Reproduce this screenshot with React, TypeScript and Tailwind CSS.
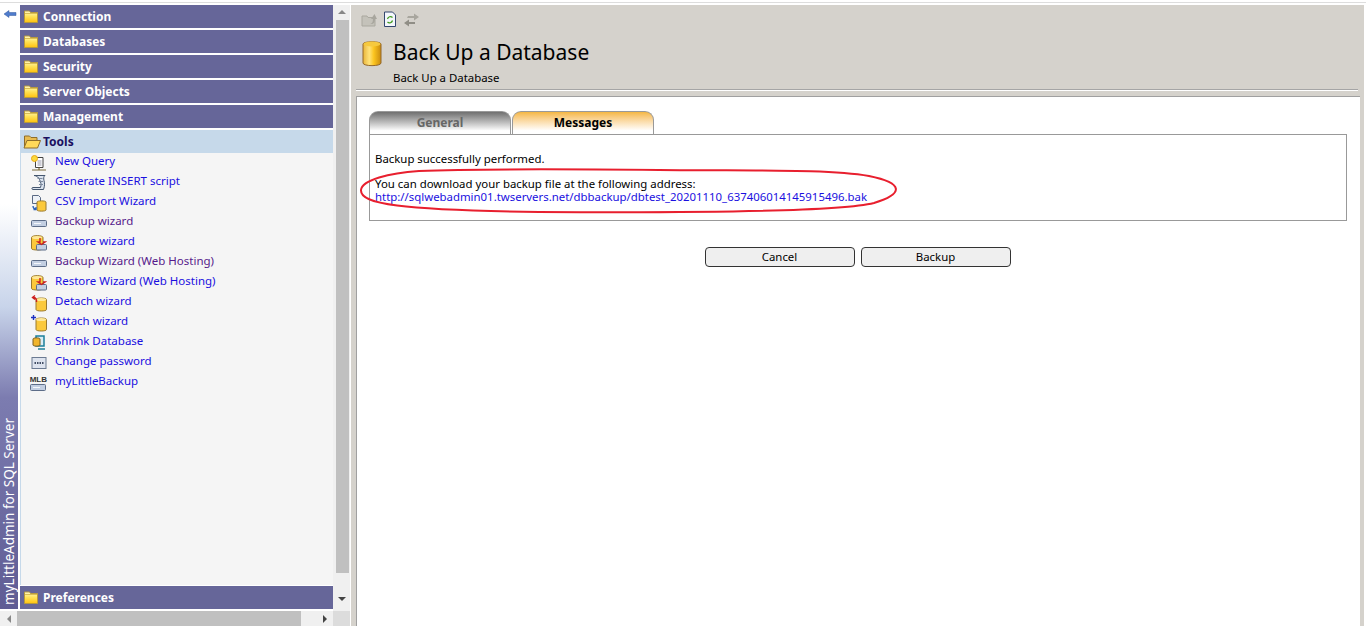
const font = "[font-family:'Noto_Sans',sans-serif]";

function Cylinder({ size = 12 }: { size?: number }) {
  return (
    <svg width={size} height={size * 1.35} viewBox="0 0 20 27">
      <defs>
        <linearGradient id="cyl" x1="0" x2="1" y1="0" y2="0">
          <stop offset="0" stopColor="#e9b53a" />
          <stop offset="0.35" stopColor="#ffe27a" />
          <stop offset="0.6" stopColor="#fcc51f" />
          <stop offset="1" stopColor="#c98a0e" />
        </linearGradient>
      </defs>
      <path d="M1 4C1 1 19 1 19 4V23C19 26.500 1 26.500 1 23Z" fill="url(#cyl)" stroke="#94682a" strokeWidth="1" />
      <ellipse cx="10" cy="4" rx="8.500" ry="2.400" fill="#f6c93e" />
    </svg>
  );
}

function Folder({ open = false }: { open?: boolean }) {
  if (open)
    return (
      <svg width="18" height="15" viewBox="0 0 18 15" className="shrink-0">
        <path d="M1.500 13.500V2h5l1.500 1.500h6v3" fill="#e7bb50" stroke="#8e6d2a" />
        <path d="M1 14 4 6.500h13.500L14.500 14Z" fill="#ffd95a" stroke="#8e6d2a" />
      </svg>
    );
  return (
    <svg width="14" height="13" viewBox="0 0 14 13" className="shrink-0">
      <defs>
        <linearGradient id="fold" x1="0" x2="0" y1="0" y2="1">
          <stop offset="0" stopColor="#fff9c8" />
          <stop offset="0.45" stopColor="#ffe45c" />
          <stop offset="1" stopColor="#ffc20e" />
        </linearGradient>
      </defs>
      <path d="M.5 12.500V1h5l1 1.500h7v10Z" fill="url(#fold)" stroke="#b89a3c" />
      <path d="M1 3.500h12" stroke="#d9bd55" />
    </svg>
  );
}

function Drive() {
  return (
    <svg width="16" height="16" viewBox="0 0 16 16">
      <rect x="0.500" y="5.500" width="15" height="6" rx="1" fill="#c3cfe2" stroke="#5d6d88" />
      <path d="M3 8.500h7" stroke="#f4f7fb" />
    </svg>
  );
}

function Restore() {
  return (
    <svg width="16" height="16" viewBox="0 0 16 16">
      <path d="M.5 2.500C.5 0 12 0 12 2.500V13.500C12 15.500 .5 15.500 .5 13.500Z" fill="#fbc93c" stroke="#9a7a30" />
      <ellipse cx="6" cy="2.500" rx="5" ry="1.500" fill="#fde89a" />
      <rect x="5.500" y="9.500" width="10" height="5.500" rx="1" fill="#c3cfe2" stroke="#5d6d88" />
      <path d="M9 3v4H7l3.500 2.500L14 7h-2" fill="none" stroke="#cc1f1f" strokeWidth="1.400" />
    </svg>
  );
}

function ToolIcon({ name }: { name: string }) {
  if (name === "query")
    return (
      <svg width="16" height="17" viewBox="0 0 16 17">
        <path d="M4.500 2.500h7.500v10H4.500Z" fill="#fff" stroke="#444" />
        <path d="M6.500 6h4M6.500 8h4M6.500 10h4" stroke="#99a" />
        <circle cx="3.500" cy="3.500" r="3" fill="#fbd93c" stroke="#e8a818" />
        <path d="M1 15h14M8 12.500V15" stroke="#7a6a3a" strokeWidth="1.200" />
      </svg>
    );
  if (name === "script")
    return (
      <svg width="16" height="18" viewBox="0 0 16 18">
        <path d="M3 1.500h11c-1.500 1-1.500 3-1 5s1 5-.5 9H2c-1.500 0-1.500-2 0-2h7.500c1-3 .5-5-1-8C7.800 4 6 1.500 3 1.500Z" fill="#dbe3ee" stroke="#44566e" />
        <path d="M6.500 4.500h5M7.500 7.500h4.500M8 10.500h4" stroke="#7d8ba0" />
      </svg>
    );
  if (name === "csv")
    return (
      <svg width="16" height="18" viewBox="0 0 16 18">
        <path d="M1.500 1.500h6l2 2v6h-8Z" fill="#eef2f8" stroke="#5a6a85" />
        <path d="M6 8C6 6.500 15 6.500 15 8v8c0 1.500-9 1.500-9 0Z" fill="#fbc93c" stroke="#9a7a30" />
        <path d="M2 12c0 2 1 3 3 3M5 13v2.500H2.500" fill="none" stroke="#2d62b8" strokeWidth="1.300" />
      </svg>
    );
  if (name === "backup") return <Drive />;
  if (name === "restore") return <Restore />;
  if (name === "detach" || name === "attach")
    return (
      <svg width="16" height="18" viewBox="0 0 16 18">
        <path d="M5 5.500C5 3.500 15.500 3.500 15.500 5.500V15.500C15.500 17.500 5 17.500 5 15.500Z" fill="#fbc93c" stroke="#9a7a30" />
        <ellipse cx="10.200" cy="5.500" rx="5" ry="1.600" fill="#fde89a" />
        {name === "attach" ? (
          <path d="M0 3.500h5M2.500 1v5" stroke="#1d2fc0" strokeWidth="1.400" />
        ) : (
          <path d="M5.500 8c.5-3-1-4.500-3-4.500M4 1.500 1.500 3.500 4 5.500" fill="none" stroke="#cc1f1f" strokeWidth="1.400" />
        )}
      </svg>
    );
  if (name === "shrink")
    return (
      <svg width="16" height="16" viewBox="0 0 16 16">
        <path d="M5 1h8v10H5Z" fill="#d8ecf5" stroke="#1b7f9a" strokeWidth="1.500" />
        <path d="M2 4C2 2.500 9 2.500 9 4v6c0 1.500-7 1.500-7 0Z" fill="#f0b52c" stroke="#7b5f20" />
        <path d="M7 14h7" stroke="#1b7f9a" strokeWidth="1.500" />
      </svg>
    );
  if (name === "password")
    return (
      <svg width="16" height="14" viewBox="0 0 16 14">
        <rect x="1" y="1.500" width="14" height="11" fill="#dde3ee" stroke="#6b7a92" />
        <path d="M3.500 7h9" stroke="#434f66" strokeWidth="2" strokeDasharray="1.500 1" />
      </svg>
    );
  return (
    <div className="flex flex-col items-center">
      <span className="font-['Liberation_Sans',sans-serif] text-[8px] font-bold leading-[8px] text-[#333]">MLB</span>
      <svg width="16" height="7" viewBox="0 0 16 7">
        <rect x="0.500" y="0.500" width="15" height="6" rx="1" fill="#c3cfe2" stroke="#5d6d88" />
        <path d="M3 3.500h7" stroke="#f4f7fb" />
      </svg>
    </div>
  );
}

const sections = ["Connection", "Databases", "Security", "Server Objects", "Management"];

const tools = [
  { label: "New Query", icon: "query" },
  { label: "Generate INSERT script", icon: "script" },
  { label: "CSV Import Wizard", icon: "csv" },
  { label: "Backup wizard", icon: "backup", visited: true },
  { label: "Restore wizard", icon: "restore" },
  { label: "Backup Wizard (Web Hosting)", icon: "backup", visited: true },
  { label: "Restore Wizard (Web Hosting)", icon: "restore" },
  { label: "Detach wizard", icon: "detach" },
  { label: "Attach wizard", icon: "attach" },
  { label: "Shrink Database", icon: "shrink" },
  { label: "Change password", icon: "password" },
  { label: "myLittleBackup", icon: "mlb" },
];

function SectionBar({ title }: { title: string }) {
  return (
    <div className="mb-[2px] flex h-[23px] items-center gap-[5px] bg-[#666699] pl-[4px] text-[12px] font-bold text-white">
      <Folder />
      <span>{title}</span>
    </div>
  );
}

function Sidebar() {
  return (
    <div className="flex w-[350px] flex-col">
      <div className="flex h-[606px]">
        <div className="mb-[2px] flex w-[18px] flex-col bg-[linear-gradient(to_bottom,#ffffff_33%,#c8d4ea_50%,#7c7cb0_65%,#5f5c94_100%)]">
          <svg width="14" height="8" viewBox="0 0 14 8" className="ml-[3px] mt-[5px]">
            <path d="M1 4 6 .5V2.500h7v3H6v2Z" fill="#4f7ccc" stroke="#355a9e" strokeWidth="0.500" />
          </svg>
          <div className="mt-auto flex justify-center pb-[4px]">
            <span className="rotate-180 text-[13.500px] leading-[18px] text-white [writing-mode:vertical-rl]">
              myLittleAdmin for SQL Server
            </span>
          </div>
        </div>
        <div className="ml-[2px] flex w-[313px] flex-col">
          {sections.map((s) => (
            <SectionBar key={s} title={s} />
          ))}
          <div className="flex h-[23px] items-center gap-[2px] bg-[#c6d9ea] pl-[3px] text-[12px] font-bold text-[#1a1060]">
            <Folder open />
            <span>Tools</span>
          </div>
          <div className="mb-[1px] flex-1 border-l border-l-[#c6d9ea] bg-[#f5f5f5]">
            {tools.map((t) => (
              <div key={t.label} className="flex h-[20px] items-center">
                <div className="flex w-[34px] shrink-0 justify-end pr-[8px]">
                  <ToolIcon name={t.icon} />
                </div>
                <span className={t.visited ? "mb-[4px] text-[#551a8b]" : "mb-[4px] text-[#1a0fe0]"}>{t.label}</span>
              </div>
            ))}
          </div>
          <SectionBar title="Preferences" />
        </div>
        <div className="flex w-[17px] flex-col items-center bg-[#f0f0f0]">
          <div className="mt-[5px] h-0 w-0 border-x-[4px] border-b-[4px] border-x-transparent border-b-[#888]" />
          <div className="ml-[2px] mt-[6px] h-[553px] w-[13px] bg-[#c0c0c0]" />
          <div className="mt-[24px] h-0 w-0 border-x-[4px] border-t-[4px] border-x-transparent border-t-[#444]" />
        </div>
      </div>
      <div className="flex h-[15px] bg-[#f0f0f0]">
        <div className="flex w-[17px] items-center justify-center">
          <div className="h-0 w-0 border-y-[4px] border-r-[4px] border-y-transparent border-r-[#888]" />
        </div>
        <div className="h-full w-[284px] bg-[#c0c0c0]" />
        <div className="flex flex-1 items-center justify-end pr-[6px]">
          <div className="h-0 w-0 border-y-[4px] border-l-[4px] border-y-transparent border-l-[#444]" />
        </div>
        <div className="w-[17px] bg-[#dcdcdc]" />
      </div>
    </div>
  );
}

function Toolbar() {
  return (
    <div className="flex h-[16px] items-center gap-[6px] pl-[5px]">
      <svg width="17" height="15" viewBox="0 0 17 15">
        <path d="M1 4h5l1 1.500h7V14H1Z" fill="#c4c2ba" stroke="#aaa89f" />
        <path d="M8 12c3 0 4-2 4-5H10l3.500-5L16 7h-2c0 3-1 5-4 5Z" fill="#a8a69e" />
      </svg>
      <svg width="12" height="16" viewBox="0 0 12 16">
        <path d="M.5 1h8l3 3v11.500H.5Z" fill="#f4f7fc" stroke="#33466e" />
        <path d="M3.500 8a3 3 0 0 1 5-1.500M8.500 9.500a3 3 0 0 1-5 1.500" fill="none" stroke="#3f9a1d" strokeWidth="1.200" />
      </svg>
      <svg width="15" height="15" viewBox="0 0 15 15" className="ml-[2px]">
        <path d="M4 4h6V1.500L15 5l-5 3.500V6H3Z" fill="#a8a69e" />
        <path d="M11 10H5V7.500L0 11l5 3.500V12h6Z" fill="#908e86" />
      </svg>
    </div>
  );
}

function Content() {
  return (
    <div className="ml-[1px] flex w-[1013px] flex-col bg-[#d5d2cc] pt-[6px] text-[11.400px] text-black">
      <div className="h-[78px] pl-[5px]">
        <Toolbar />
        <div className="mt-[13px] flex items-start pl-[6px]">
          <Cylinder size={20} />
          <div className="ml-[11px] -mt-[2px]">
            <div className="text-[21px] leading-[28px]">Back Up a Database</div>
            <div className="mt-[5px] leading-[14px]">Back Up a Database</div>
          </div>
        </div>
      </div>
      <div className="ml-[5px] mr-[6px] h-[2px] border-t border-t-[#a5a5a5] bg-white" />
      <div className="relative ml-[5px] mr-[4px] mt-[5px] flex-1 border-l border-t border-[#a0a0a0] bg-white px-[12px] pt-[14px]">
        <div className="flex gap-[1px] text-[12px] font-bold">
          <div className="flex h-[23px] w-[142px] items-center justify-center rounded-t-[9px] border border-b-0 border-[#999] bg-gradient-to-b from-[#707070] to-white to-[85%] text-[#666]">
            General
          </div>
          <div className="flex h-[23px] w-[142px] items-center justify-center rounded-t-[9px] border border-b-0 border-[#999] bg-gradient-to-b from-[#f5b740] to-white to-[85%]">
            Messages
          </div>
        </div>
        <div className="mr-[1px] h-[87px] border border-[#999] px-[5px] pt-[17px]">
          <div className="leading-[14px]">Backup successfully performed.</div>
          <div className="mt-[11px] leading-[13px]">You can download your backup file at the following address:</div>
          <div className="leading-[13px] text-[#1a0fe0]">http://sqlwebadmin01.twservers.net/dbbackup/dbtest_20201110_637406014145915496.bak</div>
        </div>
        <div className="mt-[26px] flex justify-center gap-[6px] pr-[2px]">
          <div className="flex h-[20px] w-[150px] items-center justify-center rounded-[4px] border border-[#333] bg-[#efefef]">Cancel</div>
          <div className="flex h-[20px] w-[150px] items-center justify-center rounded-[4px] border border-[#333] bg-[#efefef]">Backup</div>
        </div>
        <svg width="545" height="50" viewBox="0 0 545 50" className="absolute left-[2px] top-[71px]">
          <path d="M60 3C30 5 3 12 2 22C1 36 40 42 180 44C340 45 480 44 515 35C545 26 545 15 510 8C470 1 400 3 300 2C200 1 110 1 60 3Z" fill="none" stroke="#e81f2e" strokeWidth="2" />
        </svg>
      </div>
    </div>
  );
}

export default function App() {
  return (
    <div className={`flex h-[626px] w-[1366px] flex-col overflow-hidden bg-white text-[11.500px] ${font}`}>
      <div className="mt-[2px] h-[1px] w-full bg-[#dddddd]" />
      <div className="mt-[2px] flex flex-1">
        <Sidebar />
        <Content />
      </div>
    </div>
  );
}
